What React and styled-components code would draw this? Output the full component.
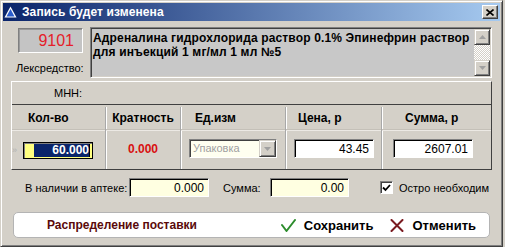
import React from 'react'
import styled, { createGlobalStyle } from 'styled-components'

const GlobalStyle = createGlobalStyle`
  * { box-sizing: border-box; }
  html, body {
    margin: 0;
    padding: 0;
    background: #d4d0c8;
    font-family: "Liberation Sans", Arial, sans-serif;
  }
`

const Window = styled.div`
  width: 503px;
  height: 247px;
  padding: 2px;
  background: #d4d0c8;
  border: 1px solid;
  border-color: #d4d0c8 #404040 #404040 #d4d0c8;
  box-shadow: inset 1px 1px #fff, inset -1px -1px #808080;
  display: flex;
  flex-direction: column;
`

const TitleBar = styled.div`
  height: 18px;
  display: flex;
  align-items: center;
  padding: 0 2px 0 1px;
  background: linear-gradient(to right, #0a246a, #a6caf0);
  color: #fff;
  font-weight: bold;
  font-size: 12px;
`

const TitleText = styled.span`
  margin-left: 5px;
  flex: 1;
  letter-spacing: 0.1px;
`

const CloseButton = styled.div`
  width: 16px;
  height: 14px;
  background: #d4d0c8;
  border: 1px solid;
  border-color: #fff #404040 #404040 #fff;
  box-shadow: inset -1px -1px #808080;
  display: flex;
  align-items: center;
  justify-content: center;
`

const Body = styled.div`
  padding: 6px 8px 0 8px;
  display: flex;
  flex-direction: column;
`

const TopSection = styled.div`
  display: flex;
  height: 51px;
`

const LeftCol = styled.div`
  width: 79px;
  display: flex;
  flex-direction: column;
`

const CodeBox = styled.div`
  margin: 1px 0 0 7px;
  width: 65px;
  height: 25px;
  background: #c4c4c4;
  border: 1px solid;
  border-color: #808080 #fff #fff #808080;
  box-shadow: inset 1px 1px #9a9a9a;
  color: #e4202a;
  font-size: 16px;
  text-align: right;
  padding: 3px 8px 0 0;
`

const Label = styled.span`
  font-size: 11px;
  color: #000;
  white-space: nowrap;
`

const ProductLabel = styled(Label)`
  margin: 9px 0 0 5px;
`

const DescBox = styled.div`
  flex: 1;
  display: flex;
  border: 1px solid;
  border-color: #808080 #fff #fff #808080;
  box-shadow: inset 1px 1px #404040, inset -1px -1px #d4d0c8;
  background: #c8c8c8;
`

const DescText = styled.div`
  flex: 1;
  padding: 3px 0 0 2px;
  font-size: 12px;
  font-weight: bold;
  line-height: 14px;
  letter-spacing: 0.15px;
  white-space: nowrap;
  overflow: hidden;
  color: #000;
`

const ScrollBar = styled.div`
  width: 16px;
  margin: 1px 1px 1px 0;
  display: flex;
  flex-direction: column;
  justify-content: space-between;
  background: repeating-conic-gradient(#fff 0 25%, #d4d0c8 0 50%) 0 0 / 2px 2px;
`

const ArrowButton = styled.div`
  width: 16px;
  height: 16px;
  background: #d4d0c8;
  border: 1px solid;
  border-color: #d4d0c8 #404040 #404040 #d4d0c8;
  box-shadow: inset 1px 1px #fff, inset -1px -1px #808080;
  display: flex;
  align-items: center;
  justify-content: center;
`

const DetailPanel = styled.div`
  margin-top: 3px;
  height: 89px;
  border: 1px solid;
  border-color: #fff #404040 #404040 #fff;
  display: flex;
  flex-direction: column;
`

const MnnRow = styled.div`
  height: 23px;
  border-bottom: 1px solid #404040;
  display: flex;
  align-items: center;
  padding-left: 42px;
`

const Grid = styled.div`
  flex: 1;
  display: grid;
  grid-template-columns: 94px 75px 105px 96px 1fr;
`

const Column = styled.div`
  display: flex;
  flex-direction: column;
  border-right: ${p => (p.$last ? 'none' : '1px solid #a8a8a8')};
  box-shadow: ${p => (p.$last ? 'none' : '1px 0 #fff')};
  margin-top: 2px;
`

const Header = styled.div`
  height: 23px;
  display: flex;
  align-items: center;
  justify-content: ${p => (p.$center ? 'center' : 'flex-start')};
  padding-left: ${p => p.$pl || 0}px;
  font-size: 12px;
  font-weight: bold;
  color: #000;
  border-bottom: 1px solid #c4c0b8;
  box-shadow: 0 1px #ece9e4;
`

const Cell = styled.div`
  flex: 1;
  display: flex;
  align-items: center;
  justify-content: ${p => (p.$center ? 'center' : 'flex-start')};
  padding-left: ${p => p.$pl || 0}px;
  padding-bottom: 2px;
`

const RowMarker = styled.span`
  width: 11px;
  font-size: 9px;
  color: #b0b0b0;
  margin-top: 3px;
`

const QtyInput = styled.div`
  width: 70px;
  height: 17px;
  margin-top: 4px;
  background: #ffff80;
  border: 1px solid #000;
  box-shadow: inset 1px 1px #808080;
  display: flex;
  justify-content: flex-end;
  padding: 1px 2px 1px 10px;
`

const Selection = styled.span`
  flex: 1;
  background: #0a246a;
  color: #fff;
  font-size: 12px;
  font-weight: bold;
  text-align: right;
  line-height: 13px;
  border-right: 1px solid #000;
`

const RedValue = styled.span`
  color: #d81010;
  font-size: 12px;
  font-weight: bold;
`

const Combo = styled.div`
  width: 88px;
  height: 19px;
  display: flex;
  background: #fffff0;
  border: 1px solid;
  border-color: #808080 #fff #fff #808080;
  box-shadow: inset 1px 1px #404040;
`

const ComboText = styled.span`
  flex: 1;
  padding: 2px 0 0 3px;
  font-size: 11px;
  color: #a0a0a0;
`

const ComboButton = styled(ArrowButton)`
  width: 17px;
  height: 17px;
`

const Field = styled.div`
  width: ${p => p.$w}px;
  height: 19px;
  background: ${p => p.$bg || '#fff'};
  border: 1px solid;
  border-color: #808080 #fff #fff #808080;
  box-shadow: inset 1px 1px #000;
  font-size: 12px;
  color: #000;
  text-align: right;
  padding: 2px 4px 0 0;
`

const StockRow = styled.div`
  margin-top: 8px;
  height: 19px;
  display: flex;
  align-items: center;
  padding-left: 14px;
`

const StockLabel = styled(Label)`
  width: ${p => p.$w}px;
  margin-left: ${p => p.$ml || 0}px;
`

const CheckBox = styled.div`
  margin-left: 31px;
  width: 13px;
  height: 13px;
  background: #fff;
  border: 1px solid;
  border-color: #808080 #fff #fff #808080;
  box-shadow: inset 1px 1px #404040;
  display: flex;
  align-items: center;
  justify-content: center;
  margin-right: 6px;
`

const ButtonBar = styled.div`
  margin: 15px 2px 0 2px;
  height: 26px;
  background: #fff;
  border: 1px solid #b4b4b4;
  border-radius: 5px;
  display: flex;
  align-items: center;
  padding: 0 13px 0 33px;
`

const DistLink = styled.span`
  flex: 1;
  color: #5a0a0a;
  font-size: 12px;
  font-weight: bold;
`

const Action = styled.span`
  display: flex;
  align-items: center;
  gap: 8px;
  margin-left: ${p => p.$ml || 0}px;
  font-size: 13px;
  font-weight: bold;
  color: #000;
`

const WindowIcon = () => (
  <svg width="13" height="12" viewBox="0 0 13 12">
    <polygon points="6.5,0.5 12.5,11.5 0.5,11.5" fill="#fff" />
    <polygon points="6.5,3 10.5,10.5 2.5,10.5" fill="#2a5ccc" />
  </svg>
)

const CloseGlyph = () => (
  <svg width="8" height="7" viewBox="0 0 8 7">
    <path d="M0.5 0.5 L7.5 6.5 M7.5 0.5 L0.5 6.5" stroke="#000" strokeWidth="1.6" />
  </svg>
)

const Triangle = ({ up, color = '#a0a0a0' }) => (
  <svg width="7" height="4" viewBox="0 0 7 4">
    <polygon points={up ? '3.5,0 7,4 0,4' : '0,0 7,0 3.5,4'} fill={color} />
  </svg>
)

const CheckMark = () => (
  <svg width="9" height="8" viewBox="0 0 9 8">
    <path d="M1 3.5 L3.5 6 L8 1" stroke="#000" strokeWidth="1.8" fill="none" />
  </svg>
)

const SaveIcon = () => (
  <svg width="15" height="13" viewBox="0 0 15 13">
    <path d="M1 6 L5.5 12 L14 1" stroke="#2c8c2c" strokeWidth="2" fill="none" strokeLinecap="round" strokeLinejoin="round" />
  </svg>
)

const CancelIcon = () => (
  <svg width="14" height="13" viewBox="0 0 14 13">
    <path d="M1.5 1 L12.5 12 M12.5 1 L1.5 12" stroke="#7a1a20" strokeWidth="2" strokeLinecap="round" />
  </svg>
)

const App = () => {
  return (
    <>
      <GlobalStyle />
      <Window>
        <TitleBar>
          <WindowIcon />
          <TitleText>Запись будет изменена</TitleText>
          <CloseButton><CloseGlyph /></CloseButton>
        </TitleBar>
        <Body>
          <TopSection>
            <LeftCol>
              <CodeBox>9101</CodeBox>
              <ProductLabel>Лексредство:</ProductLabel>
            </LeftCol>
            <DescBox>
              <DescText>
                Адреналина гидрохлорида раствор 0.1% Эпинефрин раствор
                <br />
                для инъекций 1 мг/мл 1 мл №5
              </DescText>
              <ScrollBar>
                <ArrowButton><Triangle up /></ArrowButton>
                <ArrowButton><Triangle /></ArrowButton>
              </ScrollBar>
            </DescBox>
          </TopSection>
          <DetailPanel>
            <MnnRow><Label>МНН:</Label></MnnRow>
            <Grid>
              <Column>
                <Header $pl={16}>Кол-во</Header>
                <Cell>
                  <RowMarker>»</RowMarker>
                  <QtyInput><Selection>60.000</Selection></QtyInput>
                </Cell>
              </Column>
              <Column>
                <Header $center>Кратность</Header>
                <Cell $center><RedValue>0.000</RedValue></Cell>
              </Column>
              <Column>
                <Header $pl={14}>Ед.изм</Header>
                <Cell $pl={8}>
                  <Combo>
                    <ComboText>Упаковка</ComboText>
                    <ComboButton><Triangle /></ComboButton>
                  </Combo>
                </Cell>
              </Column>
              <Column>
                <Header $pl={12}>Цена, р</Header>
                <Cell $pl={8}><Field $w={80}>43.45</Field></Cell>
              </Column>
              <Column $last>
                <Header $pl={23}>Сумма, р</Header>
                <Cell $pl={11}><Field $w={80}>2607.01</Field></Cell>
              </Column>
            </Grid>
          </DetailPanel>
          <StockRow>
            <StockLabel $w={104}>В наличии в аптеке:</StockLabel>
            <Field $w={80} $bg="#ffffe1">0.000</Field>
            <StockLabel $w={47} $ml={14}>Сумма:</StockLabel>
            <Field $w={79} $bg="#ffffe1">0.00</Field>
            <CheckBox><CheckMark /></CheckBox>
            <Label>Остро необходим</Label>
          </StockRow>
          <ButtonBar>
            <DistLink>Распределение поставки</DistLink>
            <Action><SaveIcon />Сохранить</Action>
            <Action $ml={17}><CancelIcon />Отменить</Action>
          </ButtonBar>
        </Body>
      </Window>
    </>
  )
}

export default App
